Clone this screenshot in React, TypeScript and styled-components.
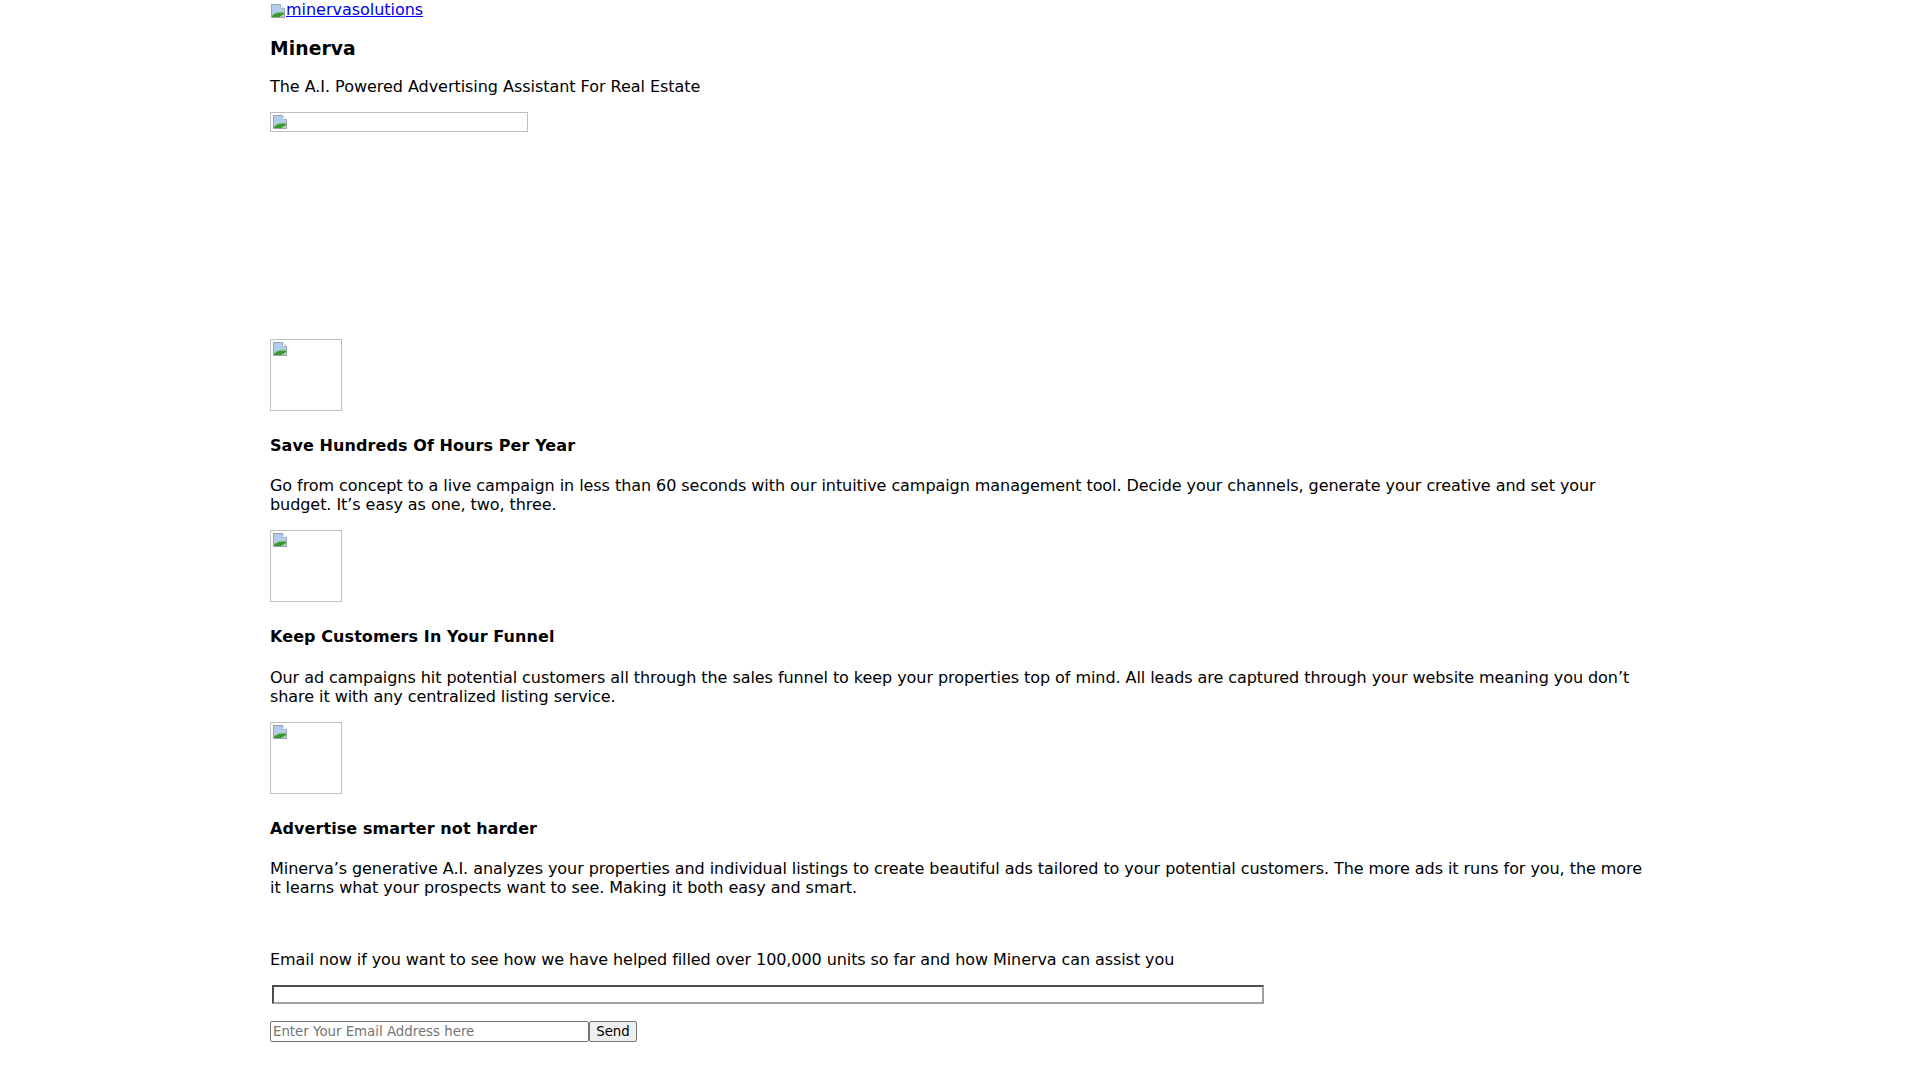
import React from "react";
import styled, { createGlobalStyle } from "styled-components";

const GlobalStyle = createGlobalStyle`
  html, body {
    margin: 0;
    padding: 0;
    background: #ffffff;
  }
  body {
    font-family: "DejaVu Sans", "Noto Sans", sans-serif;
    font-size: 16px;
    color: #000000;
  }
`;

const Page = styled.main`
  width: 1380px;
  margin: 0 auto;
`;

const BrandLink = styled.a`
  display: inline-flex;
  align-items: flex-end;
  color: #0000ee;
  text-decoration: underline;
  line-height: 18px;
  height: 19px;
  letter-spacing: -0.03px;
`;

const Title = styled.h3`
  font-size: 18.72px;
  font-weight: bold;
  margin: 15px 0 17.5px;
  line-height: normal;
  letter-spacing: 0.1px;
`;

const Lead = styled.p`
  margin: 16px 0;
  line-height: normal;
  letter-spacing: -0.04px;
`;

const HeroArea = styled.div`
  height: 227px;
`;

const PictureFrame = styled.div<{ $w: number; $h: number }>`
  box-sizing: border-box;
  width: ${(p) => p.$w}px;
  height: ${(p) => p.$h}px;
  border: 1px solid #c0c0c0;
  padding: 1px;
  display: flex;
  align-items: flex-start;
`;

const Feature = styled.section``;

const IconSlot = styled.div`
  height: 76px;
`;

const FeatureTitle = styled.h4`
  font-size: 16px;
  font-weight: bold;
  margin: 21.28px 0;
  line-height: normal;
  letter-spacing: 0.08px;
`;

const FeatureText = styled.p`
  margin: 16px 0;
  line-height: normal;
  letter-spacing: -0.06px;
`;

const CtaText = styled.p`
  margin: 53px 0 16px;
  line-height: normal;
  letter-spacing: -0.08px;
`;

const WideField = styled.input`
  display: block;
  box-sizing: border-box;
  width: 992px;
  height: 19px;
  margin: 0 0 17px 2px;
  border: 2px inset #a0a0a0;
  background: #fff;
  padding: 0;
`;

const SignupRow = styled.form`
  display: flex;
  align-items: stretch;
  margin: 0;
`;

const EmailInput = styled.input`
  box-sizing: border-box;
  width: 319px;
  height: 21px;
  border: 1px solid #767676;
  border-radius: 2px;
  padding: 1px 2px;
  font-family: "DejaVu Sans", sans-serif;
  font-size: 13.33px;
  color: #000;
  &::placeholder {
    color: #757575;
  }
`;

const SendButton = styled.button`
  box-sizing: border-box;
  height: 21px;
  width: 48px;
  padding: 1px 6px;
  border: 1px solid #767676;
  border-radius: 2px;
  background: #efefef;
  font-family: "DejaVu Sans", sans-serif;
  font-size: 13.33px;
  color: #000;
  line-height: 1;
`;

/* Placeholder glyph shown where a picture failed to load */
const MissingPicture = () => (
  <svg width="16" height="16" viewBox="0 0 16 16" aria-hidden="true">
    <path d="M1.5 1.5h9l4 4v9h-13z" fill="#e4edf9" stroke="#9aa1ab" strokeWidth="1" />
    <path d="M10.5 1.5v4h4" fill="#ffffff" stroke="#9aa1ab" strokeWidth="1" />
    <path d="M2 2h8.5v3.5H14V9L2 12z" fill="#b3cdf0" />
    <path d="M2 14V12.5C5 9.5 9 8.5 14 9.5V14z" fill="#3a9631" />
    <path d="M2 12.5C5 9.5 9 8.5 14 9.5" fill="none" stroke="#86cc70" strokeWidth="1" />
    <path d="M9 14l5-3v3z" fill="#ffffff" opacity="0.6" />
  </svg>
);

const features = [
  {
    title: "Save Hundreds Of Hours Per Year",
    text: "Go from concept to a live campaign in less than 60 seconds with our intuitive campaign management tool. Decide your channels, generate your creative and set your budget. It\u2019s easy as one, two, three.",
  },
  {
    title: "Keep Customers In Your Funnel",
    text: "Our ad campaigns hit potential customers all through the sales funnel to keep your properties top of mind. All leads are captured through your website meaning you don\u2019t share it with any centralized listing service.",
  },
  {
    title: "Advertise smarter not harder",
    text: "Minerva\u2019s generative A.I. analyzes your properties and individual listings to create beautiful ads tailored to your potential customers. The more ads it runs for you, the more it learns what your prospects want to see. Making it both easy and smart.",
  },
];

export default function App() {
  return (
    <>
      <GlobalStyle />
      <Page>
        <BrandLink href="#">
          <MissingPicture />
          minervasolutions
        </BrandLink>
        <Title>Minerva</Title>
        <Lead>The A.I. Powered Advertising Assistant For Real Estate</Lead>
        <HeroArea>
          <PictureFrame $w={258} $h={20}>
            <MissingPicture />
          </PictureFrame>
        </HeroArea>
        {features.map((f) => (
          <Feature key={f.title}>
            <IconSlot>
              <PictureFrame $w={72} $h={72}>
                <MissingPicture />
              </PictureFrame>
            </IconSlot>
            <FeatureTitle>{f.title}</FeatureTitle>
            <FeatureText>{f.text}</FeatureText>
          </Feature>
        ))}
        <CtaText>
          Email now if you want to see how we have helped filled over 100,000 units so far and how Minerva can assist you
        </CtaText>
        <WideField type="text" aria-label="message" />
        <SignupRow onSubmit={(e) => e.preventDefault()}>
          <EmailInput type="email" placeholder="Enter Your Email Address here" />
          <SendButton type="submit">Send</SendButton>
        </SignupRow>
      </Page>
    </>
  );
}
